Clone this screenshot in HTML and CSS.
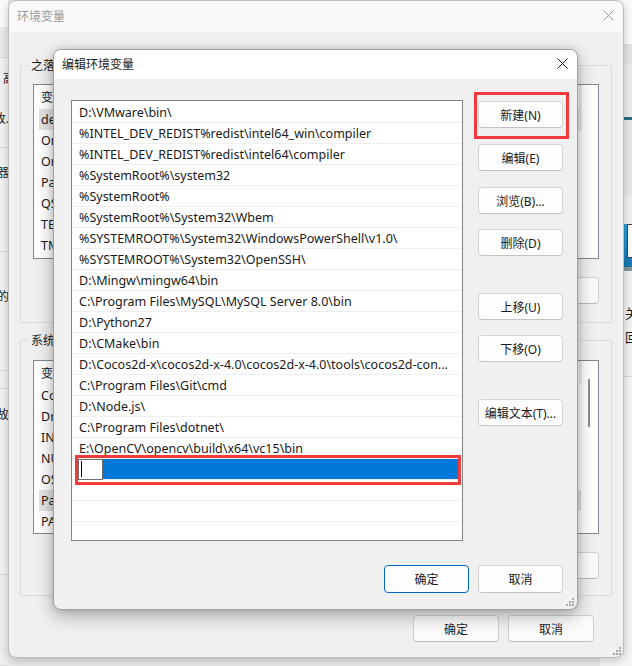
FILE: index.html
```html
<!DOCTYPE html>
<html lang="zh-CN">
<head>
<meta charset="utf-8">
<title>编辑环境变量</title>
<link rel="stylesheet" href="styles.css">
</head>
<body>
<div class="bg-left">
  <div class="bl-title"></div>
  <div class="bl-tabs"></div>
  <div class="bl-sec bl-s1"><span class="bl-t bl-gao">高级</span><span class="bl-t bl-end">更改.</span></div>
  <div class="bl-sec bl-s2"><span class="bl-t bl-end">服务器</span></div>
  <div class="bl-sec bl-s3"><span class="bl-t bl-end">目标的</span></div>
  <div class="bl-sec bl-s4"></div>
  <div class="bl-sec bl-s5"><span class="bl-t bl-end">故</span></div>
  <div class="bl-sec bl-s6"></div>
</div>

<div class="bg-right">
  <div class="br-top"></div>
  <div class="br-band"></div>
  <div class="br-a"></div>
  <div class="br-teal"></div>
  <div class="br-b"></div>
  <div class="br-c"></div>
  <div class="br-img"><div class="br-imgbox"></div></div>
  <div class="br-imgbar"></div>
  <div class="br-text"><div class="br-l1">关于</div><div class="br-l2">回</div></div>
  <div class="br-rest"></div>
</div>

<div class="win outer">
  <div class="titlebar inactive">
    <span class="title">环境变量</span>
    <svg class="close" width="11" height="11" viewBox="0 0 11 11"><path d="M0.5 0.5 L10.5 10.5 M10.5 0.5 L0.5 10.5" stroke="#9a9a9a" stroke-width="1" fill="none"/></svg>
  </div>
  <div class="outer-body">
    <fieldset class="group g1">
      <legend>之落 的用户变量(U)</legend>
      <div class="lv lv1">
        <div class="lv-head">变量</div>
        <div class="lv-row sel">deno</div>
        <div class="lv-row">OneDrive</div>
        <div class="lv-row">OneDriveConsumer</div>
        <div class="lv-row">Path</div>
        <div class="lv-row">QSYS_ROOTDIR</div>
        <div class="lv-row">TEMP</div>
        <div class="lv-row">TMP</div>
        <div class="lv-strip lv-strip1"></div>
      </div>
      <div class="obtnrow">
        <button class="obtn">新建(N)...</button>
        <button class="obtn">编辑(E)...</button>
        <button class="obtn">删除(D)</button>
      </div>
    </fieldset>
    <fieldset class="group g2">
      <legend>系统变量(S)</legend>
      <div class="lv lv2">
        <div class="lv-head">变量</div>
        <div class="lv-row">ComSpec</div>
        <div class="lv-row">DriverData</div>
        <div class="lv-row">INTEL_DEV_REDIST</div>
        <div class="lv-row">NUMBER_OF_PROCESSORS</div>
        <div class="lv-row">OS</div>
        <div class="lv-row sel">Path</div>
        <div class="lv-row">PATHEXT</div>
        <div class="lv-strip"></div>
        <div class="lv-thumb"></div>
      </div>
      <div class="obtnrow obtnrow2">
        <button class="obtn">新建(W)...</button>
        <button class="obtn">编辑(I)...</button>
        <button class="obtn">删除(L)</button>
      </div>
    </fieldset>
    <div class="ofoot">
      <button class="obtn">确定</button>
      <button class="obtn">取消</button>
    </div>
  </div>
  <svg class="grip grip-outer" width="9" height="9" viewBox="0 0 9 9"><g fill="#a8a8a8"><rect x="7" y="1" width="2" height="2"/><rect x="4" y="4" width="2" height="2"/><rect x="7" y="4" width="2" height="2"/><rect x="1" y="7" width="2" height="2"/><rect x="4" y="7" width="2" height="2"/><rect x="7" y="7" width="2" height="2"/></g></svg>
</div>

<div class="win dialog">
  <div class="titlebar">
    <span class="title">编辑环境变量</span>
    <svg class="close" width="11" height="11" viewBox="0 0 11 11"><path d="M0.5 0.5 L10.5 10.5 M10.5 0.5 L0.5 10.5" stroke="#1a1a1a" stroke-width="1" fill="none"/></svg>
  </div>
  <div class="dlg-body">
    <div class="dlg-main">
      <div class="listbox">
        <div class="row">D:\VMware\bin\</div>
        <div class="row">%INTEL_DEV_REDIST%redist\intel64_win\compiler</div>
        <div class="row">%INTEL_DEV_REDIST%redist\intel64\compiler</div>
        <div class="row">%SystemRoot%\system32</div>
        <div class="row">%SystemRoot%</div>
        <div class="row">%SystemRoot%\System32\Wbem</div>
        <div class="row">%SYSTEMROOT%\System32\WindowsPowerShell\v1.0\</div>
        <div class="row">%SYSTEMROOT%\System32\OpenSSH\</div>
        <div class="row">D:\Mingw\mingw64\bin</div>
        <div class="row">C:\Program Files\MySQL\MySQL Server 8.0\bin</div>
        <div class="row">D:\Python27</div>
        <div class="row">D:\CMake\bin</div>
        <div class="row">D:\Cocos2d-x\cocos2d-x-4.0\cocos2d-x-4.0\tools\cocos2d-con...</div>
        <div class="row">C:\Program Files\Git\cmd</div>
        <div class="row">D:\Node.js\</div>
        <div class="row">C:\Program Files\dotnet\</div>
        <div class="row">E:\OpenCV\opencv\build\x64\vc15\bin</div>
        <div class="row editing"><div class="selbar"><div class="editbox"><span class="caret"></span></div></div></div>
        <div class="row"></div>
        <div class="row"></div>
        <div class="row"></div>
        <div class="mark mark-row"></div>
      </div>
      <div class="btncol">
        <div class="mark mark-btn"></div>
        <button class="btn">新建(N)</button>
        <button class="btn gap-m">编辑(E)</button>
        <button class="btn gap-m">浏览(B)...</button>
        <button class="btn gap-s">删除(D)</button>
        <button class="btn gap-l">上移(U)</button>
        <button class="btn gap-s">下移(O)</button>
        <button class="btn gap-l">编辑文本(T)...</button>
      </div>
    </div>
    <div class="dlg-foot">
      <button class="btn btn-default">确定</button>
      <button class="btn">取消</button>
    </div>
  </div>
  <svg class="grip grip-dlg" width="9" height="9" viewBox="0 0 9 9"><g fill="#a8a8a8"><rect x="7" y="1" width="2" height="2"/><rect x="4" y="4" width="2" height="2"/><rect x="7" y="4" width="2" height="2"/><rect x="1" y="7" width="2" height="2"/><rect x="4" y="7" width="2" height="2"/><rect x="7" y="7" width="2" height="2"/></g></svg>
</div>
</body>
</html>
```

FILE: styles.css
```css
* { box-sizing: border-box; }

html, body {
  margin: 0;
  padding: 0;
}

body {
  width: 632px;
  height: 666px;
  position: relative;
  overflow: hidden;
  background: #e8e8e8;
  font-family: "Noto Sans", "Noto Sans CJK SC", sans-serif;
  font-size: 12px;
  color: #1a1a1a;
}

button {
  font-family: inherit;
  font-size: 12px;
  color: #1a1a1a;
  margin: 0;
  padding: 0;
}

/* ---------- background window on the left ---------- */
.bg-left {
  position: absolute;
  left: 0;
  top: 0;
  width: 8px;
  height: 666px;
  display: flex;
  flex-direction: column;
  background: #f0f0f0;
}
.bl-title { height: 27px; background: #fbfbfb; }
.bl-tabs { height: 31px; background: #ebebeb; border-bottom: 1px solid #d9d9d9; }
.bl-sec {
  display: flex;
  flex-direction: column;
  border-bottom: 1px solid #dadada;
  background: #f3f3f3;
  position: relative;
}
.bl-s1 { height: 90px; }
.bl-s2 { height: 104px; }
.bl-s3 { height: 119px; }
.bl-s4 { height: 18px; }
.bl-s5 { height: 186px; }
.bl-s6 { flex: 1; background: #eeeeee; }
.bl-t {
  white-space: nowrap;
  line-height: 16px;
  font-size: 12px;
  color: #1a1a1a;
}
.bl-gao { margin-top: 13px; margin-left: 3px; }
.bl-s1 .bl-end { margin-top: 24px; }
.bl-s2 .bl-end { margin-top: 17px; }
.bl-s3 .bl-end { margin-top: 37px; }
.bl-s5 .bl-end { margin-top: 18px; }
.bl-end { align-self: flex-end; margin-right: -1px; }

/* ---------- background window on the right ---------- */
.bg-right {
  position: absolute;
  left: 600px;
  top: 0;
  width: 32px;
  height: 666px;
  display: flex;
  flex-direction: column;
  background: #f3f3f3;
}
.br-top { height: 44px; background: #fbfbfb; }
.br-band { height: 20px; background: #e4e4e4; }
.br-a { height: 53px; background: #ededed; }
.br-teal { height: 3px; background: #2c6c7a; }
.br-b { height: 76px; background: #e8e8e8; }
.br-c { height: 28px; background: #f0f0f0; }
.br-img {
  height: 43px;
  background: linear-gradient(180deg, #2a9fd8, #1677b0);
  padding-left: 27px;
}
.br-imgbox { width: 10px; height: 34px; background: #fafafa; border: 1px solid #444; }
.br-imgbar { height: 4px; background: #8a969c; }
.br-text {
  height: 106px;
  padding-left: 25px;
  border-bottom: 1px solid #dcdcdc;
  font-size: 13px;
  line-height: 16px;
  white-space: nowrap;
}
.br-l1 { margin-top: 34px; }
.br-l2 { margin-top: 8px; }
.br-rest { flex: 1; background: #f5f5f5; }

/* ---------- windows ---------- */
.win {
  position: absolute;
  display: flex;
  flex-direction: column;
  border-radius: 8px;
  overflow: hidden;
}

.titlebar {
  height: 30px;
  flex: none;
  display: flex;
  align-items: center;
  justify-content: space-between;
  background: #ffffff;
  padding: 0 9px 2px 8px;
  font-family: "Noto Sans CJK SC", sans-serif;
  font-size: 12px;
}
.titlebar.inactive { background: #f9f9f9; color: #9b9b9b; padding-bottom: 3px; }
.close { display: block; }

.grip { position: absolute; }

/* ---------- outer window ---------- */
.outer {
  left: 8px;
  top: 0;
  width: 616px;
  height: 658px;
  background: #f0f0f0;
  border: 1px solid #bdbdbd;
  box-shadow: 0 2px 10px rgba(0, 0, 0, 0.22);
  z-index: 2;
}
.outer .titlebar { height: 31px; }
.outer-body {
  flex: 1;
  display: flex;
  flex-direction: column;
  padding: 0 11px;
}

.group {
  margin: 0;
  padding: 0 12px;
  border: 1px solid #dcdcdc;
  border-radius: 0;
  min-width: 0;
}
.group legend {
  margin-left: -4px;
  padding: 0 2px;
  font-family: "Noto Sans CJK SC", sans-serif;
  font-size: 12px;
  line-height: 16px;
  white-space: nowrap;
}
.g1 { margin-top: 25px; height: 266px; }
.g2 { margin-top: 9px; height: 264px; }

.lv {
  position: relative;
  background: #ffffff;
  border: 1px solid #828790;
  display: flex;
  flex-direction: column;
  overflow: hidden;
}
.lv1 { margin-top: 11px; height: 175px; }
.lv2 { margin-top: 12px; height: 174px; }
.lv-head {
  height: 24px;
  flex: none;
  line-height: 24px;
  padding-left: 7px;
  font-family: "Noto Sans CJK SC", sans-serif;
}
.lv-row {
  height: 21px;
  flex: none;
  line-height: 22px;
  margin-left: 5px;
  margin-right: 17px;
  padding-left: 2px;
  white-space: nowrap;
  font-size: 12.5px;
}
.lv-row.sel { background: #e2e2e2; }
.lv-strip {
  position: absolute;
  right: 16px;
  top: 0;
  width: 3px;
  height: 24px;
  background: #ececec;
}
.lv-strip1 { height: 46px; }
.lv-thumb {
  position: absolute;
  right: 8px;
  top: 18px;
  width: 2px;
  height: 48px;
  background: #8a8a8a;
}

.obtnrow {
  display: flex;
  justify-content: flex-end;
  gap: 9px;
  margin-top: 18px;
}
.obtnrow2 { margin-top: 18px; }
.obtn {
  width: 86px;
  height: 27px;
  background: #fbfbfb;
  border: 1px solid #d0d0d0;
  border-bottom-color: #bcbcbc;
  border-radius: 4px;
  font-family: "Noto Sans", "Noto Sans CJK SC", sans-serif;
}
.ofoot {
  display: flex;
  justify-content: flex-end;
  gap: 9px;
  margin-top: 19px;
  padding-right: 18px;
}
.grip-outer { right: 2px; bottom: 2px; }

/* ---------- inner dialog ---------- */
.dialog {
  left: 53px;
  top: 49px;
  width: 525px;
  height: 561px;
  background: #f0f0f0;
  border: 1px solid #a0a0a0;
  box-shadow: 0 6px 18px rgba(0, 0, 0, 0.3), 0 0 6px rgba(0, 0, 0, 0.12);
  z-index: 3;
}
.dialog .titlebar { height: 29px; }
.dlg-body {
  flex: 1;
  display: flex;
  flex-direction: column;
  padding: 21px 14px 0 17px;
}
.dlg-main {
  display: grid;
  grid-template-columns: 392px 85px;
  column-gap: 15px;
  align-items: start;
}
.listbox {
  position: relative;
  height: 441px;
  background: #ffffff;
  border: 1px solid #858585;
  padding-top: 1px;
  overflow: hidden;
}
.row {
  height: 21px;
  border-bottom: 1px solid #efefef;
  padding-left: 7px;
  font-size: 12.5px;
  line-height: 22px;
  white-space: nowrap;
}
.row.editing { padding-left: 0; }
.selbar {
  height: 20px;
  margin: 0 4px 0 6px;
  background: #0078d7;
  position: relative;
}
.editbox {
  width: 25px;
  height: 21px;
  background: #ffffff;
  border: 1px solid #6f6f6f;
  position: relative;
}
.caret {
  position: absolute;
  left: 2px;
  top: 1px;
  width: 1px;
  height: 16px;
  background: #000000;
}

.mark {
  position: absolute;
  border: 3px solid #ef3b3b;
  z-index: 5;
  pointer-events: none;
}
.mark-row { left: 3px; top: 354px; width: 386px; height: 30px; }
.mark-btn { left: -4px; top: -8px; width: 95px; height: 47px; }

.btncol {
  position: relative;
  display: flex;
  flex-direction: column;
  padding-top: 1px;
}
.btn {
  width: 85px;
  height: 27px;
  background: #fdfdfd;
  border: 1px solid #d3d3d3;
  border-bottom-color: #c2c2c2;
  border-radius: 4px;
  font-family: "Noto Sans", "Noto Sans CJK SC", sans-serif;
  font-size: 12px;
  color: #1a1a1a;
}
.gap-s { margin-top: 15px; }
.gap-m { margin-top: 16px; }
.gap-l { margin-top: 37px; }

.dlg-foot {
  display: flex;
  justify-content: flex-end;
  gap: 9px;
  margin-top: 24px;
}
.dlg-foot .btn { height: 28px; }
.btn-default { border: 1px solid #0067c0; }
.grip-dlg { right: 3px; bottom: 3px; }
```
